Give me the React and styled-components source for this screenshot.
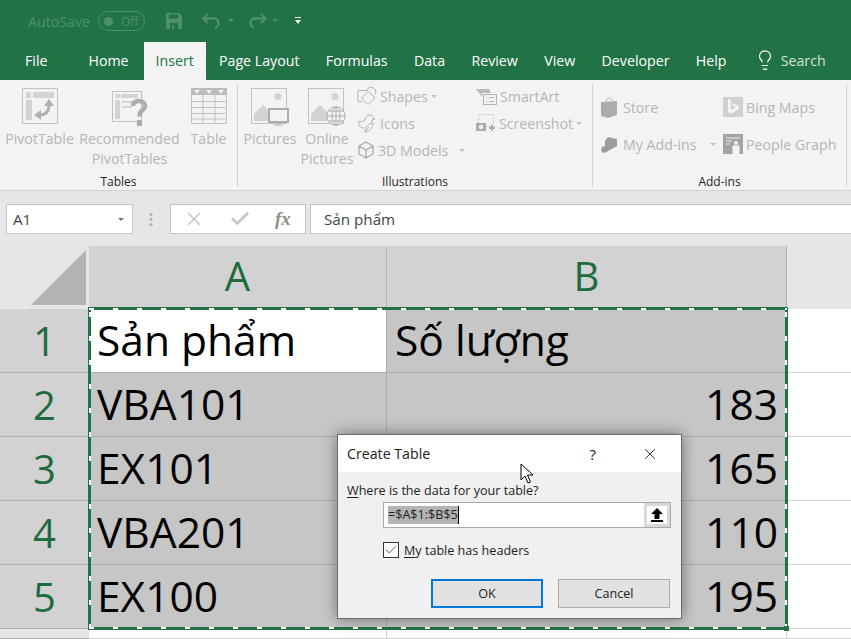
import React from "react";
import styled, { createGlobalStyle } from "styled-components";
import { Lightbulb, X, Check } from "lucide-react";

const GlobalStyle = createGlobalStyle`
  html, body { margin: 0; padding: 0; background: #fff; }
  body { font-family: "Open Sans", "Noto Sans", sans-serif; overflow: hidden; }
`;

const Page = styled.div`
  position: relative;
  width: 851px;
  height: 639px;
  overflow: hidden;
  display: flex;
  flex-direction: column;
`;

/* title bar */
const TitleBar = styled.div`
  height: 42px;
  flex: none;
  background: #217346;
  display: flex;
  align-items: center;
  padding-left: 28px;
  color: #4f9069;
  font-size: 14.2px;
`;

const Toggle = styled.div`
  width: 47px;
  height: 20px;
  margin-left: 8px;
  border: 1px solid #4f9069;
  border-radius: 10px;
  display: flex;
  align-items: center;
  gap: 8px;
  padding-left: 5px;
  box-sizing: border-box;
  font-size: 12px;
  &::before {
    content: "";
    width: 9px;
    height: 9px;
    border-radius: 50%;
    background: #4f9069;
  }
`;

const QuickIcon = styled.svg`
  flex: none;
  margin-left: ${(p) => p.$ml}px;
`;

/* tabs */
const TabBar = styled.div`
  height: 38px;
  flex: none;
  background: #217346;
  display: flex;
  align-items: stretch;
`;

const Tab = styled.div`
  padding: 0 ${(p) => p.$pad || 13.2}px 2px ${(p) => p.$padLeft || p.$pad || 13.2}px;
  display: flex;
  align-items: center;
  font-size: 14.2px;
  color: ${(p) => (p.$active ? "#217346" : "#fff")};
  background: ${(p) => (p.$active ? "#f3f3f3" : "transparent")};
`;

const SearchBox = styled.div`
  display: flex;
  align-items: center;
  gap: 5px;
  margin-left: 14px;
  padding-bottom: 2px;
  font-size: 14.2px;
  color: #d3e3d9;
`;

/* ribbon */
const Ribbon = styled.div`
  height: 111px;
  flex: none;
  box-sizing: border-box;
  background: #f3f3f3;
  border-bottom: 1px solid #d2d2d2;
  display: flex;
  padding-top: 4px;
`;

const Group = styled.div`
  width: ${(p) => p.$w}px;
  height: 103px;
  flex: none;
  border-right: 1px solid #d2d2d2;
  display: flex;
  flex-direction: column;
  padding-left: ${(p) => p.$pl || 0}px;
  box-sizing: border-box;
`;

const GroupBody = styled.div`
  flex: 1;
  display: flex;
  min-height: 0;
`;

const GroupLabel = styled.div`
  height: 13px;
  margin-left: ${(p) => -(p.$pl || 0)}px;
  text-align: center;
  font-size: 12px;
  line-height: 16px;
  color: #262626;
`;

const BigButton = styled.div`
  width: ${(p) => p.$w}px;
  flex: none;
  display: flex;
  flex-direction: column;
  align-items: center;
  padding-top: 4px;
  font-size: 14.2px;
  line-height: 20px;
  color: #b5b5b5;
  text-align: center;
  white-space: nowrap;
`;

const IconSlot = styled.div`
  height: 41px;
  padding-top: ${(p) => p.$top || 0}px;
  box-sizing: border-box;
`;

const SmallColumn = styled.div`
  width: ${(p) => p.$w}px;
  flex: none;
  display: flex;
  flex-direction: column;
  gap: ${(p) => p.$gap || 5}px;
  padding-top: ${(p) => p.$top || 1}px;
`;

const SmallButton = styled.div`
  height: 22px;
  display: flex;
  align-items: center;
  gap: ${(p) => p.$gap || 3}px;
  font-size: 14.2px;
  color: #b5b5b5;
  white-space: nowrap;
`;

const Caret = styled.span`
  width: 0;
  height: 0;
  margin-left: ${(p) => p.$ml || 0}px;
  border-left: 3.5px solid transparent;
  border-right: 3.5px solid transparent;
  border-top: 3.5px solid ${(p) => p.$color || "#c0c0c0"};
`;

/* formula bar */
const FormulaBar = styled.div`
  height: 55px;
  flex: none;
  box-sizing: border-box;
  background: #e6e6e6;
  display: flex;
  align-items: flex-start;
  padding: 13px 0 0 6px;
`;

const NameBox = styled.div`
  width: 127px;
  height: 30px;
  box-sizing: border-box;
  background: #fff;
  border: 1px solid #c6c6c6;
  display: flex;
  align-items: center;
  justify-content: space-between;
  padding: 0 8px 0 6px;
  font-size: 15.2px;
  color: #444;
`;

const Grip = styled.div`
  width: 4px;
  height: 14px;
  margin: 8px 17px 0 16px;
  background: radial-gradient(circle, #b5b5b5 1.6px, transparent 1.8px) 0 0 / 4px 5px;
`;

const FormulaButtons = styled.div`
  width: 136px;
  height: 30px;
  box-sizing: border-box;
  background: #fff;
  border: 1px solid #c6c6c6;
  display: flex;
  align-items: center;
  padding-left: 12px;
  gap: 24px;
  color: #c4c4c4;
`;

const FxLabel = styled.span`
  font-family: "Liberation Serif", serif;
  font-style: italic;
  font-weight: bold;
  font-size: 19px;
  color: #8e8e8e;
`;

const FormulaInput = styled.div`
  flex: 1;
  height: 30px;
  margin-left: 4px;
  box-sizing: border-box;
  background: #fff;
  border: 1px solid #c6c6c6;
  border-right: 0;
  padding-left: 13px;
  line-height: 28px;
  font-size: 15.2px;
  color: #444;
`;

/* sheet */
const Sheet = styled.div`
  position: relative;
  flex: 1;
  display: grid;
  grid-template-columns: 89px 298px 400px 1fr;
  grid-template-rows: 63px repeat(5, 64px) 1fr;
  background: #fff;
`;

const Corner = styled.div`
  background: #e6e6e6;
  position: relative;
  &::after {
    content: "";
    position: absolute;
    right: 3px;
    bottom: 4px;
    width: 0;
    height: 0;
    border-left: 55px solid transparent;
    border-bottom: 55px solid #b4b4b4;
  }
`;

const ColumnHead = styled.div`
  background: #d2d2d2;
  border-right: 1px solid #b2b2b2;
  box-sizing: border-box;
  display: flex;
  align-items: center;
  justify-content: center;
  padding-bottom: 3px;
  font-size: 40px;
  line-height: 1;
  color: #1f6b41;
`;

const HeadGap = styled.div`
  background: #e6e6e6;
`;

const RowHead = styled.div`
  background: ${(p) => (p.$off ? "#e6e6e6" : "#d2d2d2")};
  border-bottom: 1px solid #b2b2b2;
  box-sizing: border-box;
  display: flex;
  align-items: center;
  justify-content: center;
  font-size: 40px;
  line-height: 1;
  color: #1f6b41;
`;

const Cell = styled.div`
  box-sizing: border-box;
  background: ${(p) => (p.$active ? "#fff" : "#c6c6c6")};
  border-right: 1px solid #ababab;
  border-bottom: 1px solid #ababab;
  display: flex;
  align-items: center;
  justify-content: ${(p) => (p.$right ? "flex-end" : "flex-start")};
  padding: 0 8px;
  font-size: 42.5px;
  line-height: 1;
  color: #000;
  white-space: nowrap;
  overflow: hidden;
`;

const EmptyCell = styled.div`
  box-sizing: border-box;
  border-bottom: 1px solid #d4d4d4;
  border-right: ${(p) => (p.$line ? "1px solid #d4d4d4" : "0")};
`;

const Selection = styled.div`
  position: absolute;
  left: 88px;
  top: 61px;
  width: 700px;
  height: 323px;
  box-sizing: border-box;
  border: 3px solid #217346;
  pointer-events: none;
  &::before {
    content: "";
    position: absolute;
    inset: -2px;
    background:
      repeating-linear-gradient(90deg, #fff 0 5px, transparent 5px 24px) 0 0 / 100% 2px no-repeat,
      repeating-linear-gradient(90deg, #fff 0 5px, transparent 5px 24px) 0 100% / 100% 2px no-repeat,
      repeating-linear-gradient(0deg, #fff 0 5px, transparent 5px 24px) 0 0 / 2px 100% no-repeat,
      repeating-linear-gradient(0deg, #fff 0 5px, transparent 5px 24px) 100% 0 / 2px 100% no-repeat;
  }
  &::after {
    content: "";
    position: absolute;
    right: -4px;
    bottom: -4px;
    width: 5px;
    height: 5px;
    background: #217346;
  }
`;

/* dialog */
const Dialog = styled.div`
  position: absolute;
  left: 337px;
  top: 434px;
  width: 345px;
  height: 185px;
  box-sizing: border-box;
  background: #f0f0f0;
  border: 1px solid #6d6d6d;
  box-shadow: 0 0 14px rgba(0, 0, 0, 0.45);
  display: flex;
  flex-direction: column;
  color: #222;
`;

const DialogTitle = styled.div`
  height: 37px;
  flex: none;
  background: #fff;
  display: flex;
  align-items: center;
  padding-left: 9px;
  font-size: 14.2px;
`;

const Help = styled.span`
  margin-left: auto;
  margin-right: 45px;
  font-size: 15px;
`;

const CloseBox = styled.span`
  display: flex;
  margin-right: 22px;
`;

const DialogBody = styled.div`
  flex: 1;
  display: flex;
  flex-direction: column;
  padding: 10px 10px 0 9px;
  font-size: 12.6px;
  line-height: 17px;
`;

const Underlined = styled.span`
  text-decoration: underline;
  text-underline-offset: 2px;
`;

const RangeRow = styled.div`
  width: 288px;
  height: 26px;
  margin: 3px 0 0 36px;
  box-sizing: border-box;
  border: 1px solid #a9a9a9;
  background: #fff;
  display: flex;
  align-items: center;
`;

const RangeText = styled.div`
  flex: 1;
  padding-left: 4px;
  display: flex;
  align-items: center;
`;

const Selected = styled.span`
  background: #b4b4b4;
  line-height: 18px;
  border-right: 1px solid #000;
`;

const RangeButton = styled.div`
  width: 26px;
  height: 24px;
  box-sizing: border-box;
  background: #fff;
  border: 3px solid #d9d9d9;
  display: flex;
  align-items: center;
  justify-content: center;
`;

const CheckRow = styled.div`
  display: flex;
  align-items: center;
  gap: 5px;
  margin: 12px 0 0 36px;
`;

const CheckLabel = styled.span`
  padding-top: 2px;
`;

const CheckBox = styled.div`
  width: 16px;
  height: 16px;
  box-sizing: border-box;
  border: 1px solid #333;
  background: #fff;
  display: flex;
  align-items: center;
  justify-content: center;
`;

const DialogActions = styled.div`
  display: flex;
  gap: 15px;
  margin: 20px 0 0 84px;
`;

const DialogButton = styled.div`
  width: 112px;
  height: 29px;
  box-sizing: border-box;
  background: #e1e1e1;
  border: ${(p) => (p.$primary ? "2px solid #0078d7" : "1px solid #adadad")};
  display: flex;
  align-items: center;
  justify-content: center;
`;

const Pointer = styled.svg`
  position: absolute;
  left: 520px;
  top: 463px;
`;

/* drawn icons */
const G = "#c3c0c3";
const D = "#d5d2d5";

const PivotIcon = () => (
  <svg width="36" height="36" viewBox="0 0 36 36">
    <rect x="0.5" y="0.5" width="35" height="35" fill="none" stroke={G} />
    <rect x="4" y="4" width="5" height="6" fill={D} />
    <rect x="11" y="4" width="21" height="6" fill={D} />
    <rect x="4" y="12" width="6" height="20" fill={D} />
    <path d="M17 27C23 27 27 24 27 17" fill="none" stroke="#b1aeb1" strokeWidth="3" />
    <path d="M27 11l5 7H22zM12 27l7-5v10z" fill="#b1aeb1" />
  </svg>
);

const RecommendedIcon = () => (
  <svg width="36" height="36" viewBox="0 0 36 36">
    <rect x="0.5" y="0.5" width="29" height="30" fill="#f3f3f3" stroke={G} />
    <rect x="3" y="3" width="5" height="4" fill={D} />
    <rect x="9" y="3" width="17" height="4" fill={D} />
    <rect x="3" y="9" width="5" height="19" fill={D} />
    <rect x="10" y="10" width="14" height="2" fill={D} />
    <rect x="10" y="15" width="10" height="2" fill={D} />
    <path d="M21 15c0-3 2-5 5.500-5S33 12 33 15c0 2-1 3-3 4.500-2 1.500-2.500 2.500-2.500 6" fill="none" stroke="#aeabae" strokeWidth="4.500" />
    <rect x="25" y="29" width="5" height="6" fill="#aeabae" />
  </svg>
);

const TableIcon = () => (
  <svg width="36" height="36" viewBox="0 0 36 36">
    <rect x="0" y="0" width="36" height="7" fill="#bdbabd" />
    <path d="M3 2h6l-3 4zM15 2h6l-3 4zM27 2h6l-3 4z" fill="#f3f3f3" />
    <path d="M0.5 7v28.5h35V7M12 7v28M24 7v28M0 13.5h36M0 19.5h36M0 25.5h36M0 31h36" fill="none" stroke={G} />
  </svg>
);

const PictureBase = () => (
  <>
    <rect x="0.5" y="0.5" width="35" height="35" fill="#f3f3f3" stroke={G} />
    <circle cx="27" cy="8.500" r="3.500" fill={D} />
    <path d="M3 33V26l9-9 7 7 3-3v12z" fill={D} />
  </>
);

const PicturesIcon = () => (
  <svg width="38" height="38" viewBox="0 0 38 38">
    <PictureBase />
    <rect x="18" y="21" width="19" height="13" fill="#f3f3f3" stroke="#aeabae" strokeWidth="2" />
    <path d="M27.500 34v3M23 37h9" stroke="#aeabae" strokeWidth="1.200" />
  </svg>
);

const OnlineIcon = () => (
  <svg width="38" height="38" viewBox="0 0 38 38">
    <PictureBase />
    <circle cx="28" cy="28" r="9.200" fill="#f3f3f3" stroke="#aeabae" />
    <ellipse cx="28" cy="28" rx="4" ry="9.200" fill="none" stroke="#aeabae" />
    <path d="M28 19v18M19 28h18M20.500 23h15M20.500 33h15" fill="none" stroke="#aeabae" />
  </svg>
);

const ShapesIcon = () => (
  <svg width="20" height="20" viewBox="0 0 20 20" fill="none" stroke="#b5b2b5">
    <path d="M11 4.500H1v11h4" />
    <path d="M10 3.500a4.700 4.700 0 1 1 8 5" />
    <path d="M4.500 12L11.500 5.500 18 12 11 18.500z" />
  </svg>
);

const DuckIcon = () => (
  <svg width="20" height="20" viewBox="0 0 20 20" fill="none" stroke="#b5b2b5">
    <path d="M1 8c2 1 5 1 7-1 0-3 2-5 5-5 2 0 3 1 3 3l2 1-3 1c0 2-1 3-2 4" />
    <path d="M2 8c-1 4 1 7 5 7M8 19c0-5 3-8 8-9 0 5-3 9-8 9zM8 19l4-5" />
  </svg>
);

const CubeIcon = () => (
  <svg width="18" height="18" viewBox="0 0 18 18" fill="none" stroke="#a9a6a9" strokeWidth="1.200" strokeLinejoin="round">
    <path d="M9 1l7 4v8l-7 4-7-4V5zM2 5l7 4 7-4M9 9v8" />
  </svg>
);

const SmartArtIcon = () => (
  <svg width="21" height="17" viewBox="0 0 21 17">
    <path d="M0 1h13l2 4H6v4z" fill="#bdbabd" />
    <rect x="7.500" y="6.500" width="13" height="10" fill="#f3f3f3" stroke="#b5b2b5" />
    <path d="M10 9.500h1M13 9.500h5M10 13.500h1M13 13.500h5" stroke="#b5b2b5" />
  </svg>
);

const ScreenshotIcon = () => (
  <svg width="20" height="18" viewBox="0 0 20 18">
    <rect x="2.500" y="0.500" width="15" height="12" fill="none" stroke="#c3c0c3" strokeDasharray="1.500 1.500" />
    <rect x="0" y="9" width="10" height="8" fill="#aeabae" />
    <circle cx="5" cy="13" r="2.200" fill="#f3f3f3" />
    <path d="M13 14h6M16 11v6" stroke="#aeabae" strokeWidth="2" />
  </svg>
);

const StoreIcon = () => (
  <svg width="17" height="21" viewBox="0 0 17 21">
    <path d="M0 5l16-1v14l-9 3-7-2z" fill="#aeabae" />
    <path d="M5 5c0-5 6-5 6-1" fill="none" stroke="#aeabae" />
  </svg>
);

const AddInsIcon = () => (
  <svg width="17" height="17" viewBox="0 0 17 17">
    <path d="M7 1l9 2v7l-9 5-3-1v-9z" fill="#9e9b9e" />
    <circle cx="3.500" cy="13.500" r="3.200" fill="#9e9b9e" />
  </svg>
);

const BingIcon = () => (
  <svg width="20" height="20" viewBox="0 0 20 20">
    <rect width="20" height="20" fill="#d1cfd1" />
    <path d="M5 2l3 1v10l5-3-3-1-1-3 7 3v3l-8 5-3-2z" fill="#f3f3f3" />
  </svg>
);

const PeopleIcon = () => (
  <svg width="20" height="20" viewBox="0 0 20 20">
    <rect width="20" height="20" fill="#a5a2a5" />
    <path d="M3 4h14M3 7h6M3 10h4" stroke="#f3f3f3" />
    <circle cx="13" cy="9" r="2" fill="#f3f3f3" />
    <rect x="9.500" y="11.500" width="7" height="8.500" fill="#f3f3f3" />
  </svg>
);

const rows = [
  ["Sản phẩm", "Số lượng"],
  ["VBA101", "183"],
  ["EX101", "165"],
  ["VBA201", "110"],
  ["EX100", "195"],
];

export default function App() {
  return (
    <Page>
      <GlobalStyle />
      <TitleBar>
        AutoSave
        <Toggle>Off</Toggle>
        <QuickIcon $ml={21} width="16" height="16" viewBox="0 0 16 16" fill="#4f9069">
          <path d="M0 0h13l3 3v13H0zM3 1.500v4h9v-4zM4 10v6h2v-4h2v4h4v-6z" fillRule="evenodd" />
        </QuickIcon>
        <QuickIcon $ml={20} width="34" height="16" viewBox="0 0 34 16" fill="none" stroke="#4f9069">
          <path d="M6 1L1.500 5.500 6 10M2 5.500h9c7 0 7 8 2 9" strokeWidth="2.400" />
          <path d="M26 6h6l-3 3z" fill="#4f9069" stroke="none" />
        </QuickIcon>
        <QuickIcon $ml={10} width="34" height="16" viewBox="0 0 34 16" fill="none" stroke="#4f9069">
          <path d="M15 1l4.500 4.500L15 10M19 5.500h-9c-7 0-7 8-2 9" strokeWidth="2.400" />
          <path d="M26 6h6l-3 3z" fill="#4f9069" stroke="none" />
        </QuickIcon>
        <QuickIcon $ml={15} width="6" height="8" viewBox="0 0 6 8">
          <path d="M0 0h6v1H0zM0 3h6L3 7 0 3z" fill="#fff" />
        </QuickIcon>
      </TitleBar>

      <TabBar>
        <Tab $pad={40} $padLeft={25}>File</Tab>
        <Tab $pad={15} $padLeft={1}>Home</Tab>
        <Tab $active $pad={12}>Insert</Tab>
        <Tab>Page Layout</Tab>
        <Tab>Formulas</Tab>
        <Tab>Data</Tab>
        <Tab>Review</Tab>
        <Tab>View</Tab>
        <Tab>Developer</Tab>
        <Tab>Help</Tab>
        <SearchBox>
          <Lightbulb size={22} strokeWidth={1.300} color="#fff" />
          Search
        </SearchBox>
      </TabBar>

      <Ribbon>
        <Group $w={238}>
          <GroupBody>
            <BigButton $w={79}><IconSlot><PivotIcon /></IconSlot>PivotTable</BigButton>
            <BigButton $w={101}><IconSlot $top={3}><RecommendedIcon /></IconSlot>Recommended<br />PivotTables</BigButton>
            <BigButton $w={57}><IconSlot><TableIcon /></IconSlot>Table</BigButton>
          </GroupBody>
          <GroupLabel>Tables</GroupLabel>
        </Group>
        <Group $w={355} $pl={5}>
          <GroupBody>
            <BigButton $w={54}><IconSlot><PicturesIcon /></IconSlot>Pictures</BigButton>
            <BigButton $w={60}><IconSlot><OnlineIcon /></IconSlot>Online<br />Pictures</BigButton>
            <SmallColumn $w={119}>
              <SmallButton><ShapesIcon />Shapes<Caret /></SmallButton>
              <SmallButton><DuckIcon />Icons</SmallButton>
              <SmallButton><CubeIcon />3D Models<Caret $ml={8} /></SmallButton>
            </SmallColumn>
            <SmallColumn $w={115}>
              <SmallButton><SmartArtIcon />SmartArt</SmallButton>
              <SmallButton><ScreenshotIcon />Screenshot<Caret /></SmallButton>
            </SmallColumn>
          </GroupBody>
          <GroupLabel $pl={5}>Illustrations</GroupLabel>
        </Group>
        <Group $w={254} $pl={8}>
          <GroupBody>
            <SmallColumn $w={122} $gap={15} $top={12}>
              <SmallButton $gap={5}><StoreIcon />Store</SmallButton>
              <SmallButton $gap={5}><AddInsIcon />My Add-ins<Caret $ml={8} /></SmallButton>
            </SmallColumn>
            <SmallColumn $w={120} $gap={15} $top={12}>
              <SmallButton><BingIcon />Bing Maps</SmallButton>
              <SmallButton><PeopleIcon />People Graph</SmallButton>
            </SmallColumn>
          </GroupBody>
          <GroupLabel $pl={8}>Add-ins</GroupLabel>
        </Group>
      </Ribbon>

      <FormulaBar>
        <NameBox>A1<Caret $color="#777" /></NameBox>
        <Grip />
        <FormulaButtons>
          <X size={22} strokeWidth={1.800} color="#c8c8c8" />
          <Check size={22} strokeWidth={3} color="#c8c8c8" />
          <FxLabel>fx</FxLabel>
        </FormulaButtons>
        <FormulaInput>Sản phẩm</FormulaInput>
      </FormulaBar>

      <Sheet>
        <Corner />
        <ColumnHead>A</ColumnHead>
        <ColumnHead>B</ColumnHead>
        <HeadGap />
        {rows.map((row, i) => (
          <React.Fragment key={i}>
            <RowHead>{i + 1}</RowHead>
            <Cell $active={i === 0}>{row[0]}</Cell>
            <Cell $right={i > 0}>{row[1]}</Cell>
            <EmptyCell />
          </React.Fragment>
        ))}
        <RowHead $off />
        <EmptyCell $line />
        <EmptyCell $line />
        <EmptyCell />
        <Selection />
      </Sheet>

      <Dialog>
        <DialogTitle>
          Create Table
          <Help>?</Help>
          <CloseBox><X size={18} strokeWidth={1.200} color="#222" /></CloseBox>
        </DialogTitle>
        <DialogBody>
          <div><Underlined>W</Underlined>here is the data for your table?</div>
          <RangeRow>
            <RangeText><Selected>=$A$1:$B$5</Selected></RangeText>
            <RangeButton>
              <svg width="14" height="14" viewBox="0 0 14 14">
                <path d="M7 0l6 6H9.500v5h-5V6H1zM1 12h12v2H1z" fill="#000" />
              </svg>
            </RangeButton>
          </RangeRow>
          <CheckRow>
            <CheckBox><Check size={14} strokeWidth={1.600} color="#555" /></CheckBox>
            <CheckLabel><Underlined>M</Underlined>y table has headers</CheckLabel>
          </CheckRow>
          <DialogActions>
            <DialogButton $primary>OK</DialogButton>
            <DialogButton>Cancel</DialogButton>
          </DialogActions>
        </DialogBody>
      </Dialog>

      <Pointer width="14" height="21" viewBox="0 0 14 21">
        <path d="M1 1v16l4-4 3 7 2.500-1-3-7h5.500z" fill="#fff" stroke="#000" />
      </Pointer>
    </Page>
  );
}
